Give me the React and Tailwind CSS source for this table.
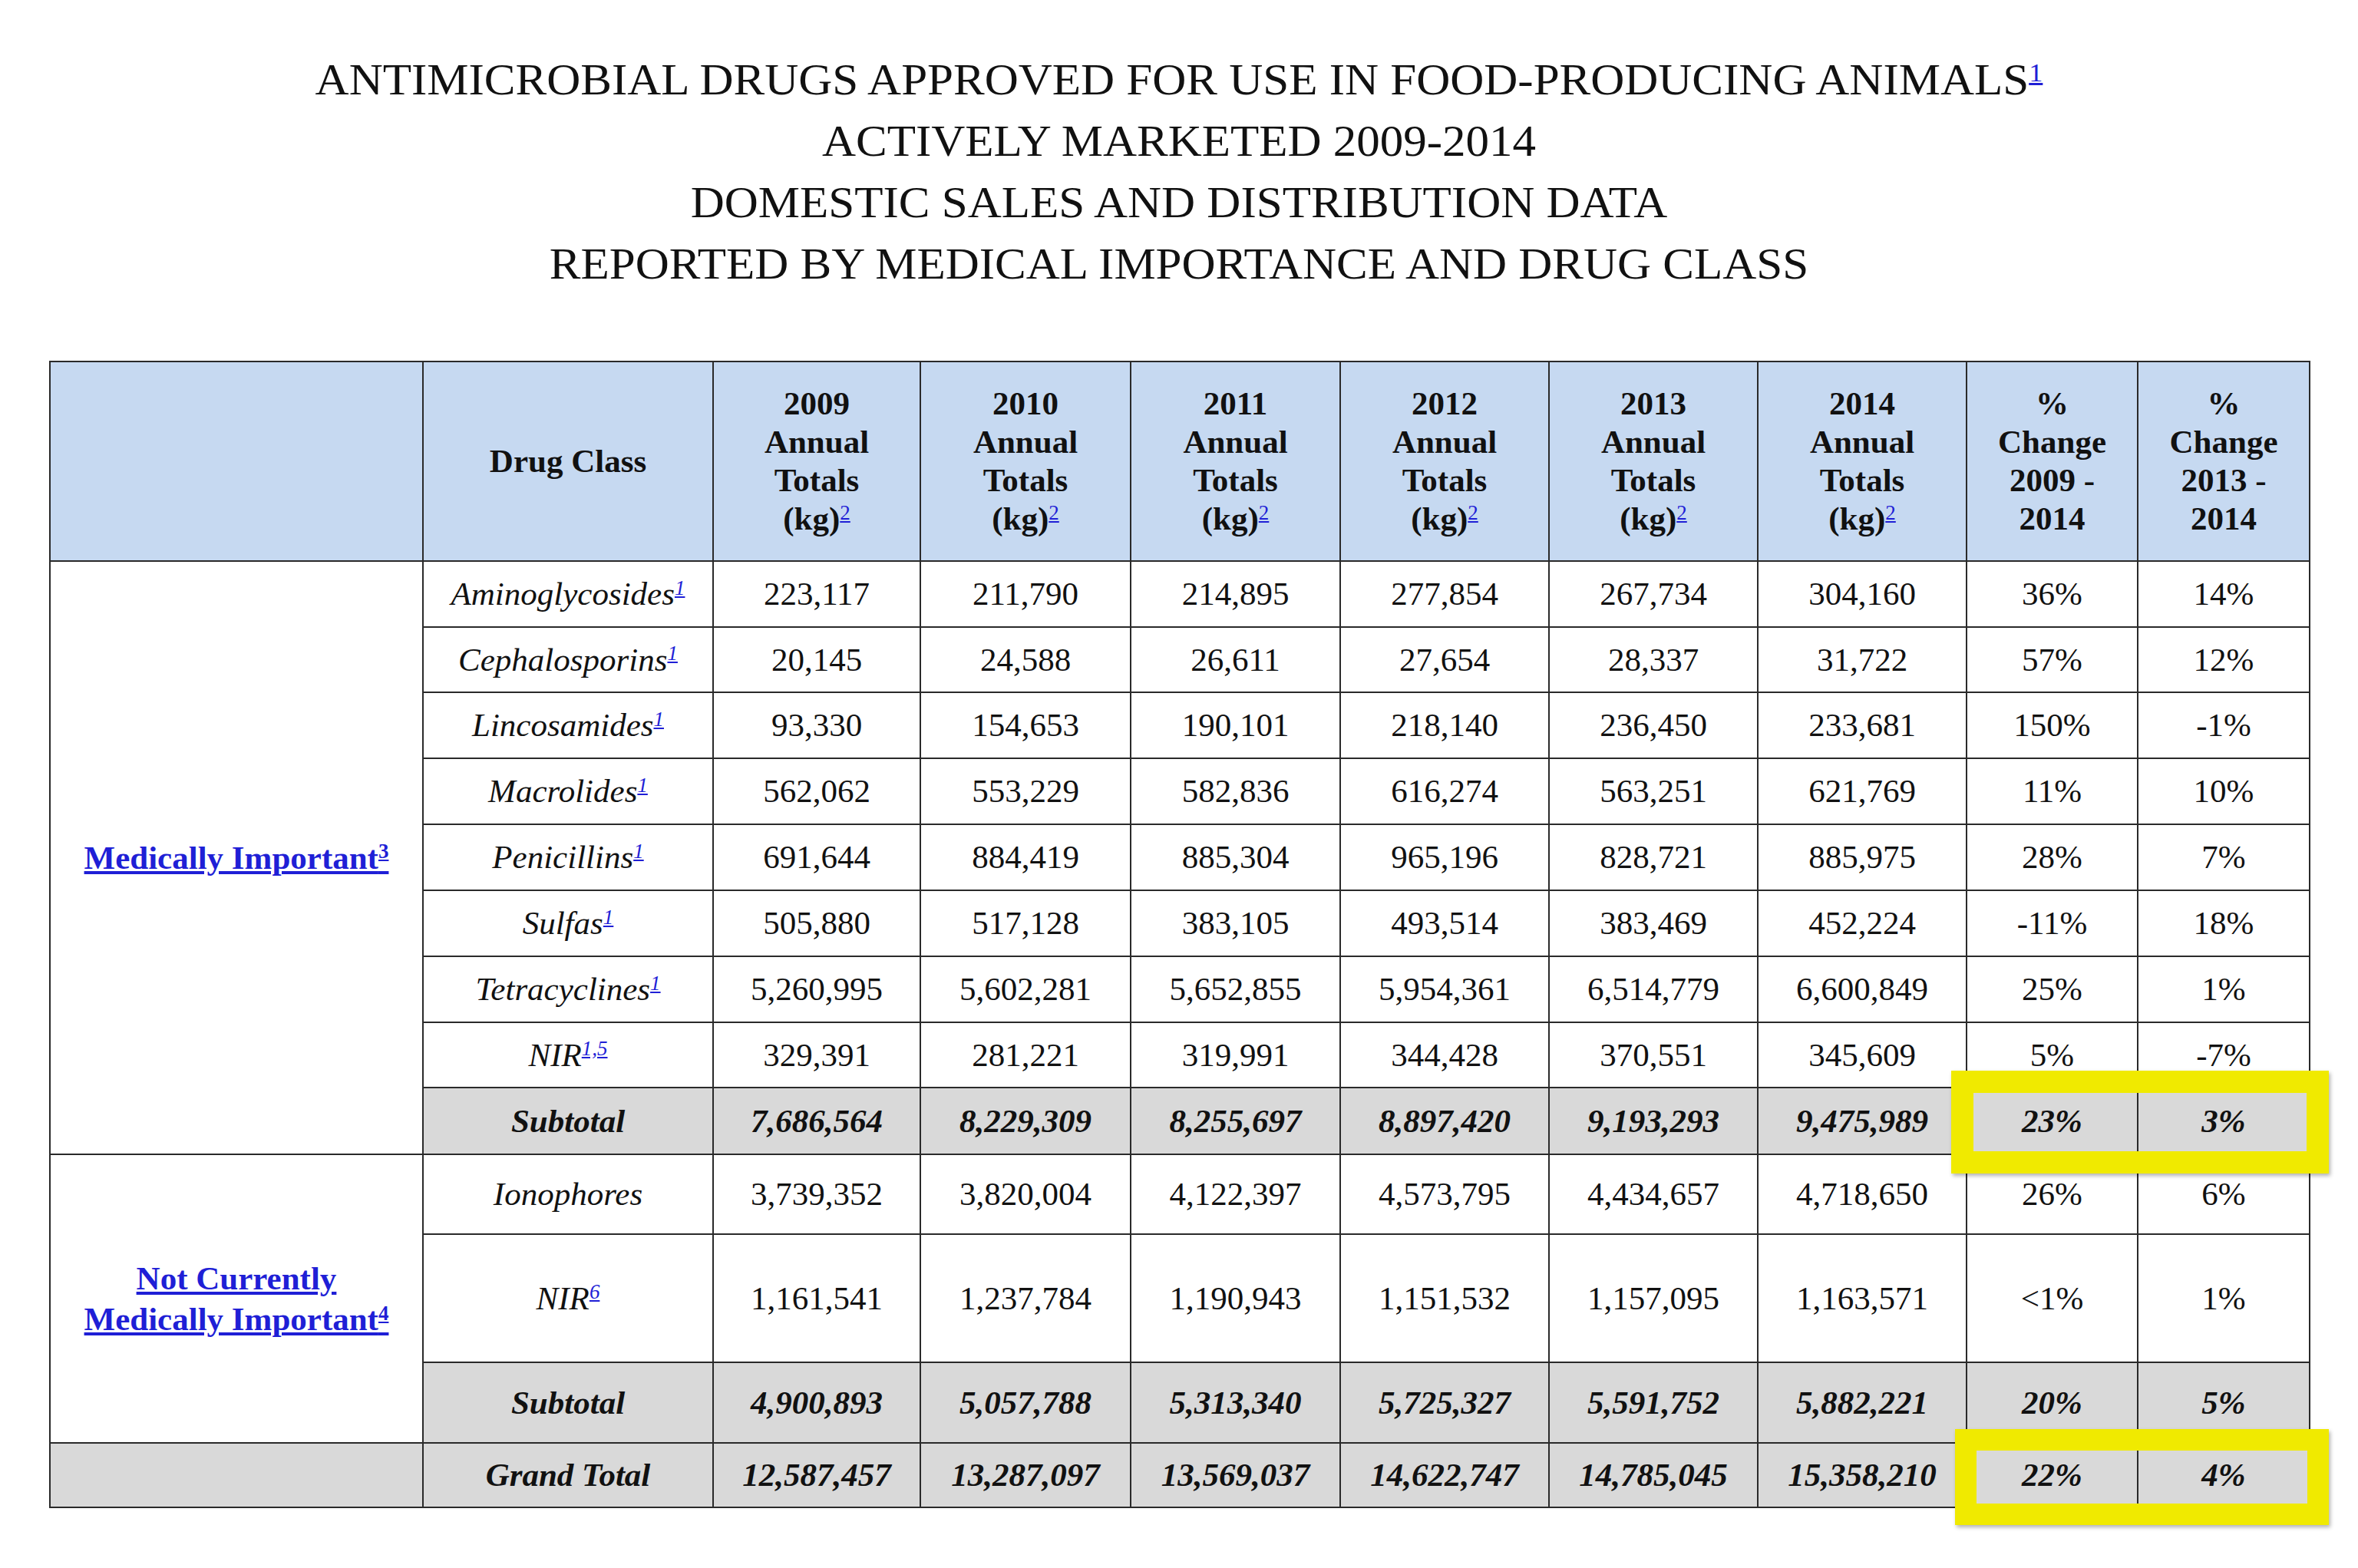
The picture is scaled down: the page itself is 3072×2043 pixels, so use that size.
import React from "react";

const medical = [
  ["Aminoglycosides", "1", ["223,117", "211,790", "214,895", "277,854", "267,734", "304,160"], "36%", "14%", "h-[86px]"],
  ["Cephalosporins", "1", ["20,145", "24,588", "26,611", "27,654", "28,337", "31,722"], "57%", "12%", "h-[85px]"],
  ["Lincosamides", "1", ["93,330", "154,653", "190,101", "218,140", "236,450", "233,681"], "150%", "-1%", "h-[86px]"],
  ["Macrolides", "1", ["562,062", "553,229", "582,836", "616,274", "563,251", "621,769"], "11%", "10%", "h-[86px]"],
  ["Penicillins", "1", ["691,644", "884,419", "885,304", "965,196", "828,721", "885,975"], "28%", "7%", "h-[86px]"],
  ["Sulfas", "1", ["505,880", "517,128", "383,105", "493,514", "383,469", "452,224"], "-11%", "18%", "h-[86px]"],
  ["Tetracyclines", "1", ["5,260,995", "5,602,281", "5,652,855", "5,954,361", "6,514,779", "6,600,849"], "25%", "1%", "h-[86px]"],
  ["NIR", "1,5", ["329,391", "281,221", "319,991", "344,428", "370,551", "345,609"], "5%", "-7%", "h-[85px]"],
];

const years = ["2009", "2010", "2011", "2012", "2013", "2014"];

const cell = "border-2 border-[#2a2a2a] text-center align-middle p-0";

function Note({ n, bold }) {
  return (
    <sup className={`text-[27px] text-[#1f1fd6] underline ${bold ? "font-bold" : "font-normal"}`}>
      {n}
    </sup>
  );
}

function TotalRow({ label, values, a, b, h, full }) {
  return (
    <tr className={`${h} bg-[#d9d9d9] font-bold italic`}>
      {full && <td className={cell}></td>}
      <td className={cell}>{label}</td>
      {values.map((v, i) => (
        <td key={i} className={cell}>
          {v}
        </td>
      ))}
      <td className={cell}>{a}</td>
      <td className={cell}>{b}</td>
    </tr>
  );
}

export default function App() {
  return (
    <div className="min-h-screen bg-white text-[#111] font-['Liberation_Serif','Times_New_Roman',serif]">
      {/* title */}
      <div className="pt-[64px] text-center text-[57px] leading-[80px] scale-x-[1.07]">
        <div>
          ANTIMICROBIAL DRUGS APPROVED FOR USE IN FOOD-PRODUCING ANIMALS
          <sup className="text-[34px] text-[#1f1fd6] underline">1</sup>
        </div>
        <div>ACTIVELY MARKETED 2009-2014</div>
        <div>DOMESTIC SALES AND DISTRIBUTION DATA</div>
        <div>REPORTED BY MEDICAL IMPORTANCE AND DRUG CLASS</div>
      </div>

      {/* table */}
      <div className="relative w-[2944px] mx-auto mt-[86px] text-[43px] leading-[50px]">
        <table className="w-full table-fixed border-collapse">
          <colgroup>
            <col className="w-[486px]" />
            <col className="w-[378px]" />
            <col className="w-[270px]" />
            <col className="w-[274px]" />
            <col className="w-[273px]" />
            <col className="w-[272px]" />
            <col className="w-[272px]" />
            <col className="w-[272px]" />
            <col className="w-[223px]" />
            <col className="w-[224px]" />
          </colgroup>
          <thead>
            <tr className="h-[260px] bg-[#c6d9f1] font-bold">
              <td className={cell}></td>
              <td className={cell}>Drug Class</td>
              {years.map((y) => (
                <td key={y} className={cell}>
                  {y}
                  <br />
                  Annual
                  <br />
                  Totals
                  <br />
                  (kg)
                  <Note n="2" />
                </td>
              ))}
              <td className={cell}>
                %<br />
                Change
                <br />
                2009 -<br />
                2014
              </td>
              <td className={cell}>
                %<br />
                Change
                <br />
                2013 -<br />
                2014
              </td>
            </tr>
          </thead>
          <tbody>
            {medical.map(([name, note, values, a, b, h], i) => (
              <tr key={name} className={h}>
                {i === 0 && (
                  <td rowSpan={9} className={`${cell} font-bold`}>
                    <span className="text-[#1f1fd6] underline">
                      Medically Important
                      <Note n="3" bold />
                    </span>
                  </td>
                )}
                <td className={`${cell} italic`}>
                  {name}
                  <Note n={note} />
                </td>
                {values.map((v, j) => (
                  <td key={j} className={cell}>
                    {v}
                  </td>
                ))}
                <td className={cell}>{a}</td>
                <td className={cell}>{b}</td>
              </tr>
            ))}
            <TotalRow
              label="Subtotal"
              values={["7,686,564", "8,229,309", "8,255,697", "8,897,420", "9,193,293", "9,475,989"]}
              a="23%"
              b="3%"
              h="h-[87px]"
            />
            <tr className="h-[104px]">
              <td rowSpan={3} className={`${cell} font-bold leading-[53px]`}>
                <span className="text-[#1f1fd6] underline">
                  Not Currently
                  <br />
                  Medically Important
                  <Note n="4" bold />
                </span>
              </td>
              <td className={`${cell} italic`}>Ionophores</td>
              {["3,739,352", "3,820,004", "4,122,397", "4,573,795", "4,434,657", "4,718,650"].map((v, j) => (
                <td key={j} className={cell}>
                  {v}
                </td>
              ))}
              <td className={cell}>26%</td>
              <td className={cell}>6%</td>
            </tr>
            <tr className="h-[167px]">
              <td className={`${cell} italic`}>
                NIR
                <Note n="6" />
              </td>
              {["1,161,541", "1,237,784", "1,190,943", "1,151,532", "1,157,095", "1,163,571"].map((v, j) => (
                <td key={j} className={cell}>
                  {v}
                </td>
              ))}
              <td className={cell}>&lt;1%</td>
              <td className={cell}>1%</td>
            </tr>
            <TotalRow
              label="Subtotal"
              values={["4,900,893", "5,057,788", "5,313,340", "5,725,327", "5,591,752", "5,882,221"]}
              a="20%"
              b="5%"
              h="h-[105px]"
            />
            <TotalRow
              full
              label="Grand Total"
              values={["12,587,457", "13,287,097", "13,569,037", "14,622,747", "14,785,045", "15,358,210"]}
              a="22%"
              b="4%"
              h="h-[84px]"
            />
          </tbody>
        </table>

        {/* highlight boxes */}
        <div className="absolute left-[2478px] top-[925px] w-[492px] h-[134px] border-[29px] border-[#f0ea00] shadow-[2px_3px_5px_rgba(0,0,0,0.3)]"></div>
        <div className="absolute left-[2483px] top-[1392px] w-[487px] h-[125px] border-[28px] border-[#f0ea00] shadow-[2px_3px_5px_rgba(0,0,0,0.3)]"></div>
      </div>
    </div>
  );
}
